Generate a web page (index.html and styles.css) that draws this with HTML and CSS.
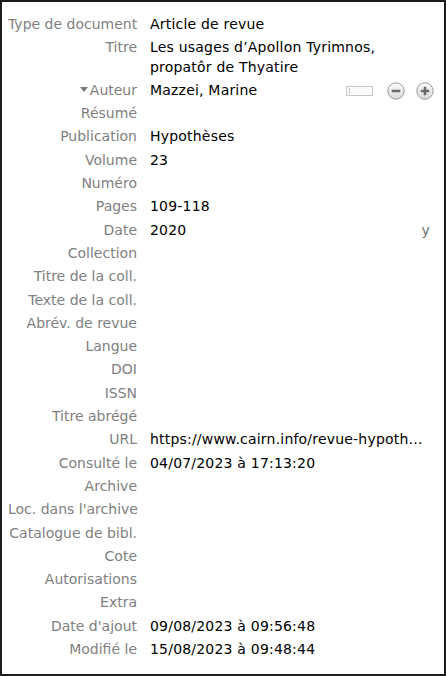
FILE: index.html
```html
<!DOCTYPE html>
<html lang="fr">
<head>
<meta charset="utf-8">
<link rel="stylesheet" href="styles.css">
</head>
<body>
<div class="pane">
  <div class="fields">
    <div class="label">Type de document</div><div class="value">Article de revue</div>
    <div class="label">Titre</div><div class="value">Les usages d’Apollon Tyrimnos,<br>propatôr de Thyatire</div>
    <div class="label"><span class="twisty"></span>Auteur</div>
    <div class="value creator">
      <span class="name">Mazzei, Marine</span>
      <span class="mode-field"><span class="caret"></span></span>
      <span class="round-btn minus">
        <svg width="18" height="18" viewBox="0 0 18 18"><defs><linearGradient id="g1" x1="0" y1="0" x2="0" y2="1"><stop offset="0" stop-color="#fdfdfd"/><stop offset="1" stop-color="#d8d8d8"/></linearGradient></defs><circle cx="9" cy="9" r="8.2" fill="url(#g1)" stroke="#999999" stroke-width="1"/><rect x="4.8" y="7.7" width="8.4" height="2.6" rx="0.6" fill="#6a6a6a"/></svg>
      </span>
      <span class="round-btn plus">
        <svg width="18" height="18" viewBox="0 0 18 18"><defs><linearGradient id="g2" x1="0" y1="0" x2="0" y2="1"><stop offset="0" stop-color="#fdfdfd"/><stop offset="1" stop-color="#d8d8d8"/></linearGradient></defs><circle cx="9" cy="9" r="8.2" fill="url(#g2)" stroke="#999999" stroke-width="1"/><rect x="4.8" y="7.7" width="8.4" height="2.6" rx="0.6" fill="#6a6a6a"/><rect x="7.7" y="4.8" width="2.6" height="8.4" rx="0.6" fill="#6a6a6a"/></svg>
      </span>
    </div>
    <div class="label">Résumé</div><div class="value"></div>
    <div class="label">Publication</div><div class="value">Hypothèses</div>
    <div class="label">Volume</div><div class="value">23</div>
    <div class="label">Numéro</div><div class="value"></div>
    <div class="label">Pages</div><div class="value">109-118</div>
    <div class="label">Date</div><div class="value date"><span>2020</span><span class="ymd">y</span></div>
    <div class="label">Collection</div><div class="value"></div>
    <div class="label">Titre de la coll.</div><div class="value"></div>
    <div class="label">Texte de la coll.</div><div class="value"></div>
    <div class="label">Abrév. de revue</div><div class="value"></div>
    <div class="label">Langue</div><div class="value"></div>
    <div class="label">DOI</div><div class="value"></div>
    <div class="label">ISSN</div><div class="value"></div>
    <div class="label">Titre abrégé</div><div class="value"></div>
    <div class="label">URL</div><div class="value url">https://www.cairn.info/revue-hypoth…</div>
    <div class="label">Consulté le</div><div class="value">04/07/2023 à 17:13:20</div>
    <div class="label">Archive</div><div class="value"></div>
    <div class="label">Loc. dans l'archive</div><div class="value"></div>
    <div class="label">Catalogue de bibl.</div><div class="value"></div>
    <div class="label">Cote</div><div class="value"></div>
    <div class="label">Autorisations</div><div class="value"></div>
    <div class="label">Extra</div><div class="value"></div>
    <div class="label">Date d'ajout</div><div class="value">09/08/2023 à 09:56:48</div>
    <div class="label">Modifié le</div><div class="value">15/08/2023 à 09:48:44</div>
  </div>
</div>
</body>
</html>
```

FILE: styles.css
```css
html, body {
  margin: 0;
  padding: 0;
  background: #ffffff;
}

.pane {
  box-sizing: border-box;
  width: 446px;
  height: 676px;
  border: 2px solid #1c1c1c;
  background: #ffffff;
  padding: 11px 12px 0 6px;
  font-family: "DejaVu Sans", sans-serif;
  font-size: 14px;
  overflow: hidden;
}

.fields {
  display: grid;
  grid-template-columns: 129px 1fr;
  column-gap: 13px;
}

.label,
.value {
  line-height: 19.3px;
  padding: 2px 0;
  min-height: 19.3px;
  white-space: nowrap;
}

.label {
  color: #808080;
  text-align: right;
}

.value {
  color: #000000;
  min-width: 0;
  letter-spacing: 0.2px;
}

.twisty {
  display: inline-block;
  width: 0;
  height: 0;
  border-left: 4px solid transparent;
  border-right: 4px solid transparent;
  border-top: 5px solid #7a7a7a;
  margin-right: 2px;
  vertical-align: 3px;
}

.creator {
  display: flex;
  align-items: center;
}

.creator .name {
  flex: 1;
}

.mode-field {
  box-sizing: border-box;
  width: 27px;
  height: 10px;
  border: 1px solid #c4c4c4;
  background: #fbfbfb;
  margin-right: 14px;
  display: flex;
  align-items: center;
  padding-left: 2px;
}

.caret {
  width: 1px;
  height: 6px;
  background: #c8c8c8;
}

.round-btn {
  display: flex;
  width: 18px;
  height: 18px;
}

.round-btn.plus {
  margin-left: 11px;
  margin-right: -2px;
}

.date {
  display: flex;
  justify-content: space-between;
}

.ymd {
  color: #6e6e6e;
  padding-right: 2px;
}

.url {
  overflow: hidden;
}
```
